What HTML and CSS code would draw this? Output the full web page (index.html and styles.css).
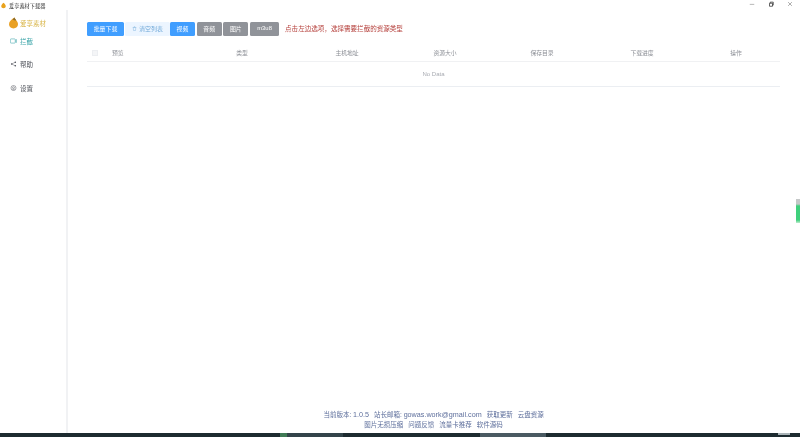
FILE: index.html
```html
<!DOCTYPE html>
<html lang="zh">
<head>
<meta charset="utf-8">
<title>爱享素材下载器</title>
<link rel="stylesheet" href="styles.css">
</head>
<body>
<div class="app">
  <header class="titlebar">
    <div class="title">
      <svg class="title-logo" viewBox="0 0 10 12"><path d="M5 .5C7.5 2.5 9.5 5 9.5 7.5 9.5 10 7.500 11.500 5 11.500S.5 10 .5 7.500C.5 5 2.500 2.500 5 .5Z" fill="#e9a21c"/></svg>
      <span>爱享素材下载器</span>
    </div>
    <div class="winctl">
      <svg viewBox="0 0 8 8"><path d="M1 4.500H7" stroke="#888" stroke-width=".8"/></svg>
      <svg viewBox="0 0 8 8"><path d="M2 3H6V7H2ZM3 3V1.500H7V5.500H6" fill="none" stroke="#333" stroke-width="1"/></svg>
      <svg viewBox="0 0 8 8"><path d="M1.500 1.500 6.500 6.500M6.500 1.500 1.500 6.500" stroke="#777" stroke-width=".8"/></svg>
    </div>
  </header>
  <div class="main">
    <aside class="sidebar">
      <div class="brand">
        <svg class="brand-logo" viewBox="0 0 10 13"><path d="M6 .5C6.500 1.500 7 2.300 8 3.500 9.300 5 10 6.500 10 8 10 10.800 7.800 12.500 5 12.500S0 10.800 0 8C0 5 2.500 3 6 .5Z" fill="#e9a125"/><path d="M6 .5C6.500 1.500 7 2.300 8 3.500 7 3.800 5.500 3.500 4 2.500Z" fill="#8a6b2c"/></svg>
        <span>爱享素材</span>
      </div>
      <nav class="nav">
        <a class="nav-item active">
          <svg viewBox="0 0 10 8"><rect x=".5" y="1" width="7" height="6" rx="1" fill="none" stroke="currentColor" stroke-width=".8"/><path d="M7.500 3 9.500 2V6L7.500 5" fill="none" stroke="currentColor" stroke-width=".8"/></svg>
          <span>拦截</span>
        </a>
        <a class="nav-item">
          <svg viewBox="0 0 10 10"><circle cx="2" cy="5" r="1.300" fill="currentColor"/><circle cx="8" cy="2" r="1.300" fill="currentColor"/><circle cx="8" cy="8" r="1.300" fill="currentColor"/><path d="M2 5 8 2M2 5 8 8" stroke="currentColor" stroke-width=".7"/></svg>
          <span>帮助</span>
        </a>
        <a class="nav-item">
          <svg viewBox="0 0 10 10"><circle cx="5" cy="5" r="4.200" fill="none" stroke="currentColor" stroke-width=".8"/><circle cx="5" cy="4.500" r="1.600" fill="none" stroke="currentColor" stroke-width=".8"/><path d="M3 8.200C3.500 7 6.500 7 7 8.200" fill="none" stroke="currentColor" stroke-width=".8"/></svg>
          <span>设置</span>
        </a>
      </nav>
    </aside>
    <main class="content">
      <div class="toolbar">
        <button class="btn primary wide">批量下载</button>
        <button class="btn ghost">
          <svg viewBox="0 0 10 10"><path d="M1.500 3H8.500M4 3V1.500H6V3M2.500 3 3 9H7L7.500 3" fill="none" stroke="currentColor" stroke-width=".8"/></svg>
          清空列表
        </button>
        <button class="btn primary tag">视频</button>
        <button class="btn grey tag">音频</button>
        <button class="btn grey tag">图片</button>
        <button class="btn grey m3u">m3u8</button>
        <span class="hint">点击左边选项，选择需要拦截的资源类型</span>
      </div>
      <div class="table">
        <div class="row head">
          <span class="check"></span>
          <span class="left">预览</span>
          <span>类型</span>
          <span>主机地址</span>
          <span>资源大小</span>
          <span>保存目录</span>
          <span>下载进度</span>
          <span class="ops">操作</span>
        </div>
        <div class="empty">No Data</div>
      </div>
      <footer class="footer">
        <p>当前版本: <span class="latin">1.0.5</span><a>站长邮箱: <span class="latin">gowas.work@gmail.com</span></a><a>获取更新</a><a>云盘资源</a></p>
        <p><a>图片无损压缩</a><a>问题反馈</a><a>流量卡推荐</a><a>软件源码</a></p>
      </footer>
    </main>
  </div>
  <div class="taskbar">
    <span class="spacer-a"></span>
    <span class="task task-a"></span>
    <span class="spacer-b"></span>
    <span class="task task-b"></span>
    <span class="spacer-c"></span>
    <span class="clock"></span>
  </div>
  <div class="edge"></div>
</div>
</body>
</html>
```

FILE: styles.css
```css
* { box-sizing: border-box; }
html, body { margin: 0; height: 100%; background: #fff; overflow: hidden; }
body {
  font-family: "Liberation Sans", "Noto Sans CJK SC", sans-serif;
  color: #606266;
}
.app {
  position: relative;
  width: 800px;
  height: 437px;
  display: flex;
  flex-direction: column;
  filter: blur(.45px);
}
.titlebar {
  height: 10px;
  flex: none;
  display: flex;
  justify-content: space-between;
  align-items: center;
  font-size: 5.2px;
  color: #333;
}
.title { display: flex; align-items: center; gap: 3px; padding-left: 1px; }
.title-logo { width: 5px; height: 7px; }
.winctl { display: flex; gap: 13px; padding-right: 7px; padding-bottom: 2px; }
.winctl svg { width: 6px; height: 6px; }
.main { flex: 1; display: flex; min-height: 0; }
.sidebar {
  width: 68px;
  flex: none;
  border-right: 2px solid #f1f2f4;
  padding-top: 7px;
}
.brand {
  display: flex;
  align-items: center;
  gap: 2px;
  padding-left: 9px;
  height: 12px;
  font-size: 6.5px;
  color: #d9b64a;
}
.brand-logo { width: 9px; height: 12px; }
.nav { display: flex; flex-direction: column; gap: 8.500px; padding-top: 4px; }
.nav-item {
  display: flex;
  align-items: center;
  gap: 3px;
  height: 15px;
  padding-left: 10px;
  font-size: 6.500px;
  color: #4d5058;
}
.nav-item svg { width: 7px; height: 6px; }
.nav-item.active { color: #3aa4a8; }
.content {
  flex: 1;
  min-width: 0;
  padding: 12px 20px 3px 19px;
  display: flex;
  flex-direction: column;
}
.toolbar { display: flex; align-items: center; height: 14px; }
.btn {
  height: 14px;
  border: 0;
  padding: 0 0 2px;
  border-radius: 1.500px;
  font: inherit;
  font-size: 5.900px;
  color: #fff;
  display: flex;
  align-items: center;
  justify-content: center;
}
.primary { background: #409eff; }
.grey { background: #909399; }
.ghost {
  width: 45px;
  background: #ecf5ff;
  color: #6fa8d8;
  gap: 2px;
}
.ghost svg { width: 5px; height: 5px; }
.wide { width: 37px; margin-right: 1px; }
.tag { width: 25px; margin-right: 1.700px; }
.m3u { width: 29px; }
.hint { margin-left: 6px; margin-bottom: 2px; font-size: 6.550px; color: #b5403c; }
.table { margin-top: 11px; }
.row {
  display: grid;
  grid-template-columns: 25px 78px 104px 106px 90px 104px 96px 90px;
  align-items: center;
  height: 15px;
  padding-bottom: 3px;
  border-bottom: 1px solid #f0f1f3;
  font-size: 5.800px;
  color: #8b8e95;
  text-align: center;
}
.check {
  width: 6px;
  height: 6px;
  margin-left: 5px;
  background: #f4f5f7;
  border: 1px solid #eceef1;
}
.left { text-align: left; }
.ops { padding-left: 2px; }
.empty {
  height: 25px;
  display: flex;
  align-items: center;
  justify-content: center;
  border-bottom: 1px solid #ebeef2;
  font-size: 6px;
  color: #a8abb2;
}
.footer { margin-top: auto; text-align: center; font-size: 6.500px; color: #5e6f9c; }
.footer p { margin: 0; height: 10px; line-height: 10px; }
.footer a { margin-left: 5px; }
.footer p:last-child a:first-child { margin-left: 0; }
.latin { font-size: 7.200px; }
.taskbar {
  height: 4px;
  flex: none;
  display: flex;
  background: #1d2b30;
}
.spacer-a { width: 280px; }
.task-a { width: 63px; background: linear-gradient(90deg, #3f7a55 0 7px, #33444a 7px); }
.spacer-b { width: 137px; }
.task-b { width: 66px; background: #4a5a62; }
.spacer-c { width: 232px; }
.clock { width: 12px; height: 2px; background: #aab4b8; }
.edge {
  position: absolute;
  right: 0;
  top: 199px;
  width: 4px;
  height: 24px;
  background: linear-gradient(#c5c8c8 0 5px, #3fd07c 7px 21px, #bfeccf);
}
```
